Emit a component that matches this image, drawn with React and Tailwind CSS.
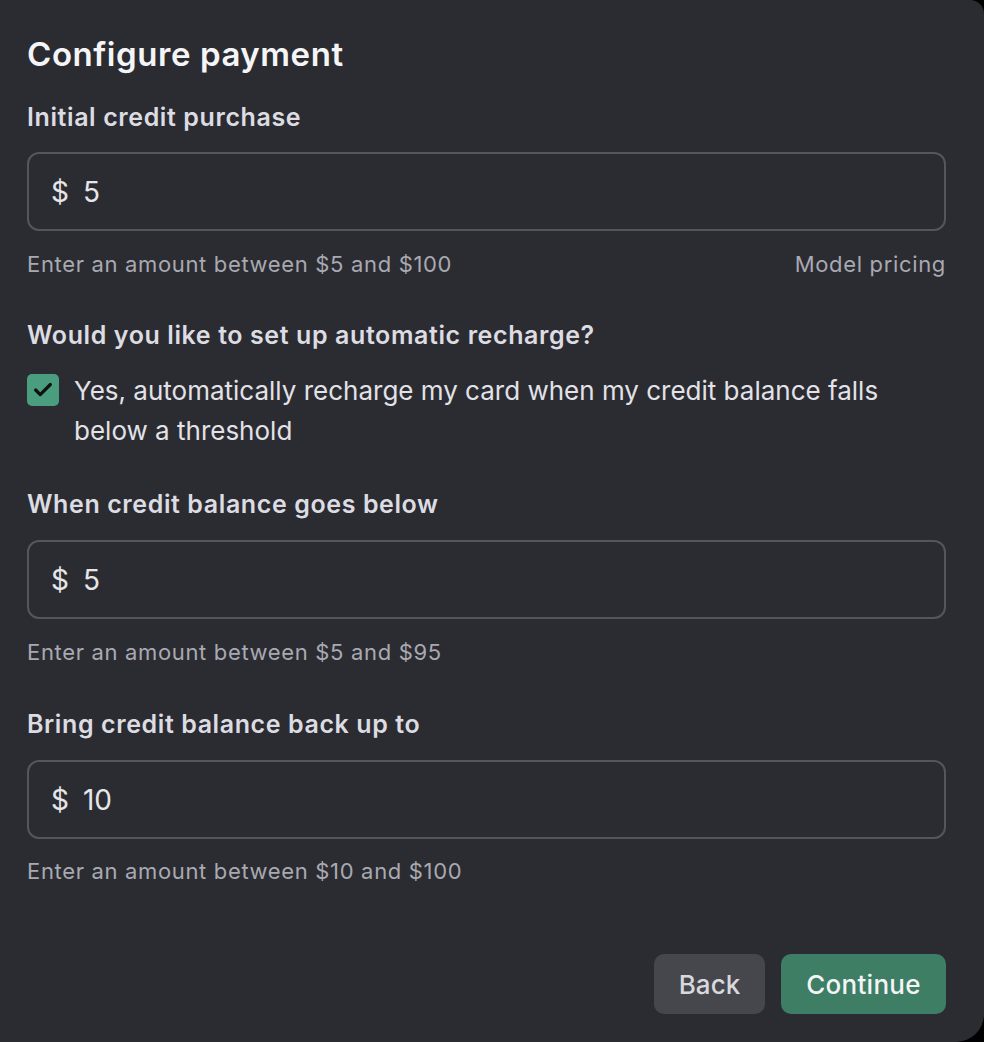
import { Check } from 'lucide-react';

const font = { fontFamily: 'Inter, "Noto Sans", sans-serif' };

const MoneyInput = ({ value }) => (
  <div className="flex h-[79px] items-center rounded-[12px] border-2 border-[#55555f] px-[22px] text-[28px] text-[#e6e6ea]">
    <span>$</span>
    <span className="ml-[14px]">{value}</span>
  </div>
);

const Hint = ({ children }) => (
  <p className="text-[22px] leading-[28px] tracking-[0.03em] text-[#a9a9b2]">{children}</p>
);

const Label = ({ children, className = '' }) => (
  <h3 className={`text-[25px] font-semibold leading-[32px] tracking-[0.024em] text-[#dcdce2] ${className}`}>{children}</h3>
);

export default function App() {
  return (
    <div className="h-[1042px] w-[984px] overflow-hidden bg-black" style={font}>
      <div className="flex h-full w-full flex-col rounded-tr-[14px] rounded-br-[28px] bg-[#2b2c31] pl-[27px] pr-[38px] pt-[34px]">
        <h2 className="text-[33px] font-semibold leading-[40px] tracking-[0.017em] text-[#f5f5f7]">Configure payment</h2>

        <Label className="mt-[27px]">Initial credit purchase</Label>
        <div className="mt-[19px]">
          <MoneyInput value="5" />
        </div>
        <div className="mt-[19px] flex items-center justify-between">
          <Hint>Enter an amount between $5 and $100</Hint>
          <Hint>Model pricing</Hint>
        </div>

        <Label className="mt-[41px]">Would you like to set up automatic recharge?</Label>
        <div className="mt-[20px] flex items-start gap-[15px]">
          <div className="mt-[3px] flex h-[32px] w-[32px] shrink-0 items-center justify-center rounded-[5px] bg-[#4a9d7f]">
            <Check size={22} strokeWidth={3.5} className="text-[#111]" />
          </div>
          <p className="pr-[20px] text-[26px] leading-[40px] text-[#e2e2e8]">
            Yes, automatically recharge my card when my credit balance falls below a threshold
          </p>
        </div>

        <Label className="mt-[37px]">When credit balance goes below</Label>
        <div className="mt-[20px]">
          <MoneyInput value="5" />
        </div>
        <div className="mt-[19px]">
          <Hint>Enter an amount between $5 and $95</Hint>
        </div>

        <Label className="mt-[42px]">Bring credit balance back up to</Label>
        <div className="mt-[20px]">
          <MoneyInput value="10" />
        </div>
        <div className="mt-[18px]">
          <Hint>Enter an amount between $10 and $100</Hint>
        </div>

        <div className="mt-[69px] flex justify-end gap-[16px]">
          <button className="h-[60px] w-[111px] rounded-[10px] bg-[#46474d] text-[26px] font-medium text-[#d8d8de]">
            Back
          </button>
          <button className="h-[60px] w-[165px] rounded-[10px] bg-[#3d7e65] text-[26px] font-medium tracking-[0.01em] text-[#f4f4f6]">
            Continue
          </button>
        </div>
      </div>
    </div>
  );
}
